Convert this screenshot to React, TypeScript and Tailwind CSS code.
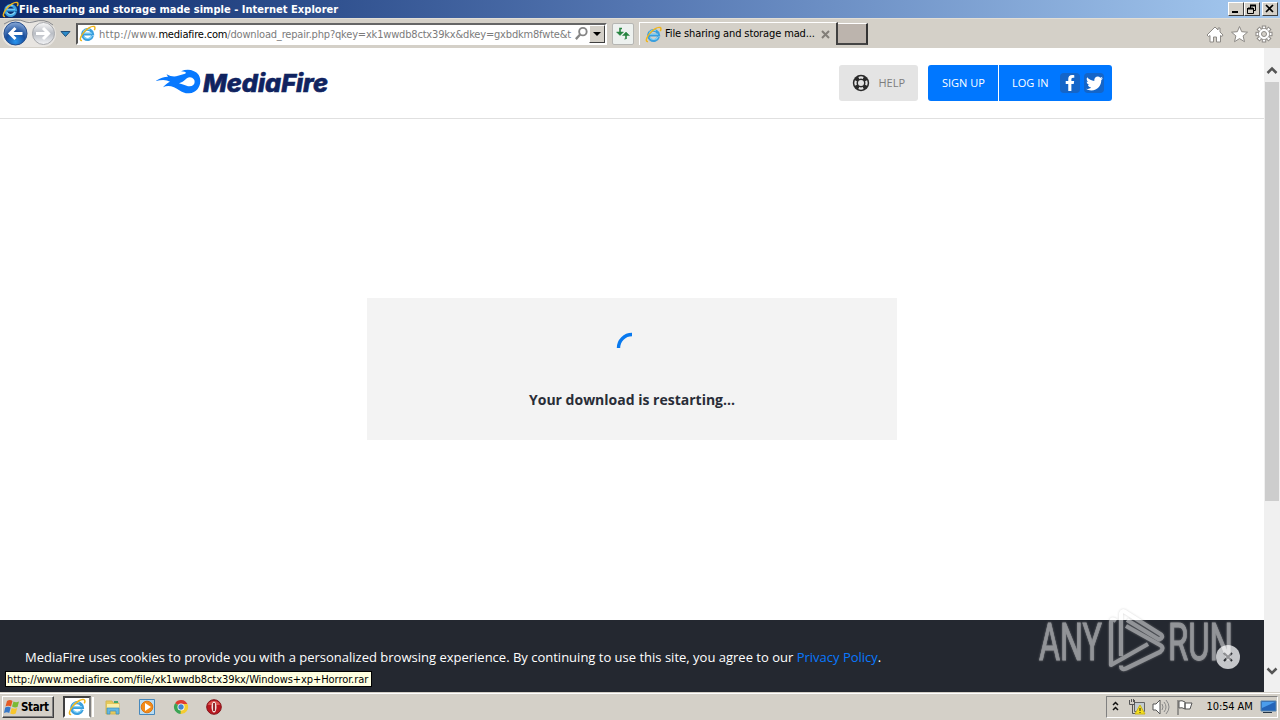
import React from 'react';
import { FaFacebookF, FaTwitter } from 'react-icons/fa';

const IeLogo = ({ className = '' }: { className?: string }) => (
  <svg viewBox="0 0 18 18" className={className} fill="none">
    <path d="M14.3 11.6A5.4 5.4 0 1 1 14.5 9.6H4.8" stroke="#3a9fde" strokeWidth="3" />
    <path d="M13.6 11.8A5 5 0 0 1 5 12M4.8 8.7h9M4.5 8a5 5 0 0 1 7-3" stroke="#86d5f8" strokeWidth="1.2" />
    <path d="M3.2 16.4C.2 17 1.2 12.7 4.4 8.6 8 4 13.3.6 16 1.6c1.4.6 1 2.4.2 3.8" stroke="#f0b51b" strokeWidth="1.5" />
  </svg>
);

const TitleBar = () => (
  <div className="flex h-[18px] shrink-0 items-center bg-gradient-to-r from-[#0c2a6b] via-[#5577b2] to-[#a6caf0] px-[2px]">
    <IeLogo className="h-[17px] w-[17px]" />
    <h1 className="w-[340px] whitespace-nowrap pt-px text-[11px] font-bold leading-[18px] tracking-[0.03px] text-white">
      File sharing and storage made simple - Internet Explorer
    </h1>
    <div className="ml-auto flex text-black">
      {['min', 'restore', 'close'].map((name) => (
        <button
          key={name}
          className={`flex h-[14px] w-4 items-center justify-center border border-b-[#404040] border-l-white border-r-[#404040] border-t-white bg-[#d4d0c8] ${name === 'close' ? 'ml-[2px]' : ''}`}
        >
          <svg viewBox="0 0 12 10" className="h-[10px] w-3 shrink-0" fill="none" stroke="currentColor">
            {name === 'min' && <path d="M2 8h6" strokeWidth="2" />}
            {name === 'restore' && (
              <>
                <path d="M4 1.5h6M2 4.5h5" strokeWidth="2" />
                <path d="M4.5 1v3M9.5 1v5.5H7M1.5 4v5.5h6V4M1 4.5h7" />
              </>
            )}
            {name === 'close' && <path d="m2 1 7 7M9 1 2 8" strokeWidth="1.7" />}
          </svg>
        </button>
      ))}
    </div>
  </div>
);

const NavButtons = () => (
  <svg viewBox="0 0 76 30" className="h-[30px] w-[76px] shrink-0">
    <defs>
      <radialGradient id="back" cx=".5" cy=".85" r=".85">
        <stop offset="0" stopColor="#2994ee" />
        <stop offset=".5" stopColor="#174d9c" />
        <stop offset="1" stopColor="#8baad8" />
      </radialGradient>
      <linearGradient id="forward" x2="0" y2="1">
        <stop stopColor="#fafafa" />
        <stop offset=".5" stopColor="#b9bdc4" />
        <stop offset="1" stopColor="#f4f5f7" />
      </linearGradient>
    </defs>
    <path d="M15 2h28a13 13 0 0 1 0 26H15a13 13 0 0 1 0-26Z" fill="#e8e5e1" />
    <path d="M4 5Q15-2 26 3q3 1 7 0 12-4 20 3" fill="none" stroke="#85878b" />
    <circle cx="15.5" cy="14.5" r="11.5" fill="url(#back)" stroke="#274f8e" />
    <circle cx="43.5" cy="14.5" r="11" fill="url(#forward)" stroke="#a7a9ad" />
    <path d="M22.5 14.5H10m5.5-5.5L10 14.5l5.5 5.5" fill="none" stroke="white" strokeWidth="3" />
    <path d="M36 14.5h12.5M43 9l5.5 5.5L43 20" fill="none" stroke="white" strokeWidth="3" />
    <path d="M61 12.5h9l-4.5 5Z" fill="#2a8ac9" stroke="#214e78" />
  </svg>
);

const Toolbar = () => (
  <div className="flex h-[30px] shrink-0 items-center border-t border-[#e2ded6] bg-[#d4d0c8] text-[11px]">
    <NavButtons />
    <div className="flex h-[22px] w-[531px] shrink-0 items-center border-2 border-b-white border-l-[#555] border-r-white border-t-[#666] bg-white">
      <IeLogo className="ml-px h-[17px] w-[17px] shrink-0" />
      <p className="ml-[3px] w-[475px] whitespace-nowrap pt-[2px] leading-4 tracking-[-0.18px] text-[#7b7b7b]">
        <span className="tracking-[0.24px]">http://www.</span>
        <span className="text-black">mediafire.com</span>/download_repair.php?qkey=xk1wwdb8ctx39kx&amp;dkey=gxbdkm8fwte&amp;t
      </p>
      <svg viewBox="0 0 16 16" className="h-[15px] w-[15px] shrink-0" fill="none" stroke="#858585">
        <circle cx="9.5" cy="6" r="4" strokeWidth="2" />
        <path d="M6.5 9 2 14" strokeWidth="2.4" />
      </svg>
      <div className="ml-auto flex h-[18px] w-[16px] items-center justify-center border border-b-[#404040] border-l-white border-r-[#404040] border-t-white bg-[#d4d0c8]">
        <svg viewBox="0 0 8 4" className="h-1 w-2"><path d="M0 0h8L4 4Z" /></svg>
      </div>
    </div>
    <div className="ml-[5px] flex h-[22px] w-[22px] shrink-0 items-center justify-center rounded-[2px] border border-[#b6b6b3] bg-[#edf1ef]">
      <svg viewBox="0 0 16 16" className="h-4 w-4" fill="none" stroke="#278440" strokeWidth="1.6">
        <path d="M7 2.5H5v5M11 13V8.5" />
        <path d="m1.5 6 3.5 3.5L8.5 6ZM7.5 9.5 11 6l3.5 3.5ZM9 13h2" fill="#278440" strokeWidth=".5" />
      </svg>
    </div>
    <div className="ml-[5px] flex h-[23px] w-[199px] shrink-0 items-center border-l border-r-2 border-t border-white border-r-[#404040]">
      <IeLogo className="ml-[5px] h-[17px] w-[17px] shrink-0" />
      <span className="ml-[3px] w-[156px] whitespace-nowrap pt-px tracking-[-0.12px] text-black">File sharing and storage mad...</span>
      <svg viewBox="0 0 9 9" className="h-[9px] w-[9px] shrink-0" stroke="#827e78" strokeWidth="2"><path d="m1 1 7 7M8 1 1 8" /></svg>
    </div>
    <div className="h-[22px] w-[30px] border-b-2 border-r-2 border-t border-b-[#444] border-r-[#333] border-t-white bg-[#bcb4ad]" />
    <svg viewBox="0 0 70 20" className="ml-auto mr-[5px] h-5 w-[70px] shrink-0" fill="#fff" stroke="#8d8a86">
      <path d="m2 11 8-8 3 3V4h2v4l3 3-1 1.5-1.5-1V18h-4v-5h-3v5H5v-6.5l-1.5 1Z" />
      <path d="m34.5 2.5 2.2 5.2 5.8.5-4.4 3.7 1.4 5.8-5-3.1-5 3.1 1.4-5.8-4.4-3.7 5.8-.5Z" />
      <g transform="translate(59 10)">
        {[0, 45, 90, 135, 180, 225, 270, 315].map((a) => (
          <rect key={a} x="-1.7" y="-8" width="3.4" height="4" transform={`rotate(${a})`} />
        ))}
        <circle r="5.3" />
        <circle r="5" stroke="none" />
        <circle r="2.5" fill="#d4d0c8" />
      </g>
    </svg>
  </div>
);

const MediaFireLogo = () => (
  <svg viewBox="0 0 176 28" className="h-7 w-[176px]">
    <path
      d="M-.5 13.2Q6 8.7 12 8.7L10.5 6.2Q17 9.7 22 7.7L29 5.7Q32 3.7 25 3.2Q32 .5 38 3.2C48 6.7 46 24.5 33 25.3C26 25.7 22 20.7 18 19.2Q12 16.7 7 19.2Q11 14.7 14 13.7Q9 10.7 -.5 13.2Z"
      fill="#0879ff"
    />
    <path d="M23 15.2Q28 16.7 32 18.2C40 19.7 41 9.7 34 9.2C30 9 29 13.7 23 15.2Z" fill="#fff" />
    <text x="47" y="23.5" fontSize="24.5" fontStyle="italic" fontWeight="800" fontFamily="Inter, sans-serif" fill="#102360" stroke="#102360" strokeWidth=".6" textLength="125" lengthAdjust="spacingAndGlyphs">
      MediaFire
    </text>
  </svg>
);

const HelpIcon = () => (
  <svg viewBox="0 0 18 18" className="h-[18px] w-[18px]" fill="none">
    <circle cx="9" cy="9" r="8.2" fill="#292929" />
    <circle cx="9" cy="9" r="3" fill="#e4e4e4" />
    {[0, 90, 180, 270].map((a) => (
      <path key={a} d="M6.8 3.9Q9 2.9 11.2 3.9" stroke="#e4e4e4" strokeWidth="2.2" transform={`rotate(${a} 9 9)`} />
    ))}
  </svg>
);

const SiteHeader = () => (
  <header className="flex h-[71px] shrink-0 items-start border-b border-[#e0e0e0] bg-white pl-[156px] pt-[17px] text-[11px]">
    <div className="mt-[3px] w-[683px]">
      <MediaFireLogo />
    </div>
    <a className="flex h-9 w-[79px] items-center rounded-[3px] bg-[#e4e4e4] pl-[13px] text-[#7d7d7d]">
      <HelpIcon />
      <span className="ml-[8.5px]">HELP</span>
    </a>
    <div className="ml-[10px] flex h-9 overflow-hidden rounded-[3px] bg-[#0077ff] text-white">
      <a className="flex w-[71px] items-center border-r border-white pl-[14px]">SIGN UP</a>
      <a className="flex w-[113px] items-center pl-[13px]">
        <span className="w-[48px]">LOG IN</span>
        <span className="flex h-5 w-5 items-center justify-center rounded-sm bg-[#1465c8]"><FaFacebookF className="h-4 w-[14px]" /></span>
        <span className="ml-1 flex h-5 w-5 items-center justify-center rounded-sm bg-[#1465c8]"><FaTwitter className="h-[17px] w-[17px]" /></span>
      </a>
    </div>
  </header>
);

const Watermark = () => (
  <svg viewBox="0 0 204 72" className="absolute bottom-[15px] right-[24px] h-[72px] w-[204px] opacity-50 drop-shadow-[0_0_1px_#aaa]">
    <g fill="#fff" stroke="#fff" strokeWidth=".9" fontFamily="Roboto, sans-serif" fontSize="52" fontWeight="400">
      <text x="3" y="54.5" textLength="63" lengthAdjust="spacingAndGlyphs">ANY</text>
      <text x="132" y="54.5" textLength="65" lengthAdjust="spacingAndGlyphs">RUN</text>
    </g>
    <g fill="none" stroke="#fff" strokeWidth="4.2" strokeLinejoin="round">
      <path d="M80 16q-5-4-5 2v42l37-21" />
      <path d="M85 51V8.500q1-4 5-1l35 22q3 3-2 5L91 15" />
      <path d="m90 21 34 19q5 3 0 7L90 63.500q-5 2-5-3" />
    </g>
  </svg>
);

const CookieBar = () => (
  <footer className="relative h-[72px] shrink-0 bg-[#242830] px-[25px] pt-[28px] text-[13px] leading-[18px] text-white">
    <p className="whitespace-nowrap">
      MediaFire uses cookies to provide you with a personalized browsing experience. By continuing to use this site, you agree to our <a className="text-[#0879ff]">Privacy Policy</a>.
    </p>
    <button className="absolute right-6 top-[25px] flex h-6 w-6 items-center justify-center rounded-full bg-[#c5c7ca]">
      <svg viewBox="0 0 10 10" className="h-[10px] w-[10px]" stroke="#24272c" strokeWidth="2"><path d="m1 1 8 8M9 1 1 9" /></svg>
    </button>
    <Watermark />
    <div className="absolute left-[5px] top-[51px] h-4 w-[367px] whitespace-nowrap border border-black bg-[#ffffe1] pl-px font-['DejaVu_Sans_Condensed','DejaVu_Sans',sans-serif] text-[11px] leading-[15px] tracking-[-0.07px] text-black">
      http://www.mediafire.com/file/xk1wwdb8ctx39kx/Windows+xp+Horror.rar
    </div>
  </footer>
);

const ScrollBar = () => (
  <div className="flex w-4 shrink-0 flex-col items-center bg-[#f0f0f0]">
    <svg viewBox="0 0 16 34" className="h-[34px] w-4 shrink-0" fill="none" stroke="#555" strokeWidth="2.5"><path d="m3.5 25 4.5-4.5 4.5 4.5" /></svg>
    <div className="h-[419px] w-[14px] bg-[#cdcdcd]" />
    <svg viewBox="0 0 16 34" className="mt-auto h-[34px] w-4 shrink-0" fill="none" stroke="#555" strokeWidth="2.5"><path d="m3.5 10.5 4.5 4.5 4.5-4.5" /></svg>
  </div>
);

const Taskbar = () => (
  <div className="flex h-[28px] shrink-0 items-center border-t border-[#d4d0c8] bg-[#d4d0c8] px-[2px] text-[11px] text-black shadow-[inset_0_1px_0_white]">
    <button className="flex h-[22px] w-[52px] items-center border border-b-[#404040] border-l-white border-r-[#404040] border-t-white shadow-[inset_-1px_-1px_0_#808080]">
      <svg viewBox="0 0 16 16" className="ml-px h-4 w-4 shrink-0">
        <path d="M3 2q3-2 5.5 0L7 7.5Q4 6 1.5 7.5Z" fill="#e45b24" />
        <path d="M9.5 2.5Q12 4 15 2.5L13.5 8Q11 9 8 7.5Z" fill="#7abb35" />
        <path d="M1.2 8.5q3-1.5 5.5 0L5.2 14Q3 12.5 0 14Z" fill="#3678c8" />
        <path d="M7.7 9q2.8 1.5 5.5 0L11.7 14.5q-2.5 1.5-5.5 0Z" fill="#f8c62b" />
      </svg>
      <span className="ml-px pt-[2px] text-[11.5px] font-bold tracking-[-0.35px]">Start</span>
    </button>
    <div className="ml-[9px] flex h-[22px] w-[28px] items-center justify-center border-2 border-b-white border-l-[#404040] border-r-[#808080] border-t-[#404040] bg-white">
      <IeLogo className="h-[18px] w-[18px]" />
    </div>
    <div className="ml-px h-5 w-[2px] bg-white" />
    <svg viewBox="0 0 18 18" className="ml-[10px] h-[18px] w-[18px]">
      <path d="M2 3h6l1 2h6v11H2Z" fill="#e7ca5b" stroke="#d3b755" />
      <path d="M3 6h12v6H3Z" fill="#faeea6" />
      <path d="M3 16v-6h12v6h-3v-3H6v3Z" fill="#63b7e2" stroke="#3a8cba" strokeWidth=".7" />
      <path d="M10 3h4v2h-4Z" fill="#43a66a" />
    </svg>
    <svg viewBox="0 0 18 18" className="ml-4 h-[18px] w-[18px]">
      <path d="M1.5 1.5h15v15h-15Z" fill="#b9dcf2" stroke="#4788bc" />
      <circle cx="9" cy="9" r="5.8" fill="#f28b18" stroke="#dc7614" />
      <path d="m7 5 6 4-6 4Z" fill="#fff" />
    </svg>
    <svg viewBox="0 0 18 18" className="ml-4 h-[18px] w-[18px]">
      <path d="M9 9 3.1 5.2A7 7 0 0 1 15.4 6H9Z" fill="#df3d31" />
      <path d="M9 9v7A7 7 0 0 1 3.1 5.2Z" fill="#3ba454" />
      <path d="M9 9V6h6.4A7 7 0 0 1 8.5 16Z" fill="#f5cc31" />
      <circle cx="9" cy="9" r="3.5" fill="#fff" />
      <circle cx="9" cy="9" r="2.7" fill="#4285cf" />
    </svg>
    <svg viewBox="0 0 18 18" className="ml-[15px] h-[18px] w-[18px]">
      <circle cx="9" cy="9" r="7.3" fill="#b91820" stroke="#83141a" />
      <path d="M3 7a6 4 0 0 1 12 0" fill="#dc5550" />
      <ellipse cx="9" cy="9" rx="2.5" ry="5.5" fill="#f2e4df" />
      <path d="M9 5v8" stroke="#8c161b" strokeWidth="1.8" />
    </svg>
    <div className="ml-auto flex h-[22px] w-[172px] items-center border border-b-white border-l-[#808080] border-r-white border-t-[#808080]">
      <svg viewBox="0 0 92 20" className="h-5 w-[92px] shrink-0" fill="none" stroke="#555">
        <path d="m6 8 2.5-2.5L11 8M6 13l2.5-2.5L11 13" stroke="#111" strokeWidth="1.5" />
        <path d="M27.5 5.5h10v9h-10Z" fill="#c4ccd0" stroke="#666" />
        <path d="M22.5 3v4.5h5V3M25.5 7v9.5h6M24.5 2v3M26.5 2v3" />
        <path d="m33 8 5 9H28Z" fill="#f6df1c" stroke="#c9b41c" />
        <path d="M33 11v3M33 15v1" stroke="#222" />
        <path d="M46 7h3l4-4v14l-4-4h-3Z" fill="#fff" />
        <path d="M55 7q2 3 0 6M57 5q4 5 0 10M59 3q6 7 0 14" stroke="#888" />
        <path d="M71 3v15M72 4q3-1 6 1v7q-3-2-6-1ZM78 6h7l-2 6h-5Z" fill="#fff" />
      </svg>
      <span className="ml-[7.5px] w-[51.5px] whitespace-nowrap pt-[2px] tracking-[-0.1px]">10:54 AM</span>
      <svg viewBox="0 0 17 16" className="ml-[3px] h-4 w-[17px] shrink-0">
        <path d="M1 2h15v10H1Z" fill="#2364b8" stroke="#5684ad" />
        <path d="M2 3h13L2 9Z" fill="#4b9dec" />
        <path d="M3 13h9v1H3Z" fill="#253546" />
      </svg>
    </div>
  </div>
);

const App = () => {
  return (
    <div className="flex h-screen w-screen flex-col overflow-hidden bg-white font-['DejaVu_Sans_Condensed','DejaVu_Sans',sans-serif]">
      <TitleBar />
      <Toolbar />
      <div className="flex h-[644px] shrink-0">
        <div className="flex min-w-0 flex-1 flex-col font-['Open_Sans',sans-serif]">
          <SiteHeader />
          <main className="flex flex-1 items-start justify-center pt-[179px]">
            <section className="flex h-[142px] w-[530px] flex-col items-center bg-[#f3f3f3] pt-[34px]">
              <svg viewBox="0 0 32 32" className="h-8 w-8" fill="none" stroke="#0879ef" strokeWidth="3.4">
                <path d="M2.5 16A13.5 13.5 0 0 1 16 2.5" />
              </svg>
              <h2 className="mt-[26px] text-[14px] font-bold leading-5 text-[#292d37]">Your download is restarting...</h2>
            </section>
          </main>
          <CookieBar />
        </div>
        <ScrollBar />
      </div>
      <Taskbar />
    </div>
  );
};

export default App;
